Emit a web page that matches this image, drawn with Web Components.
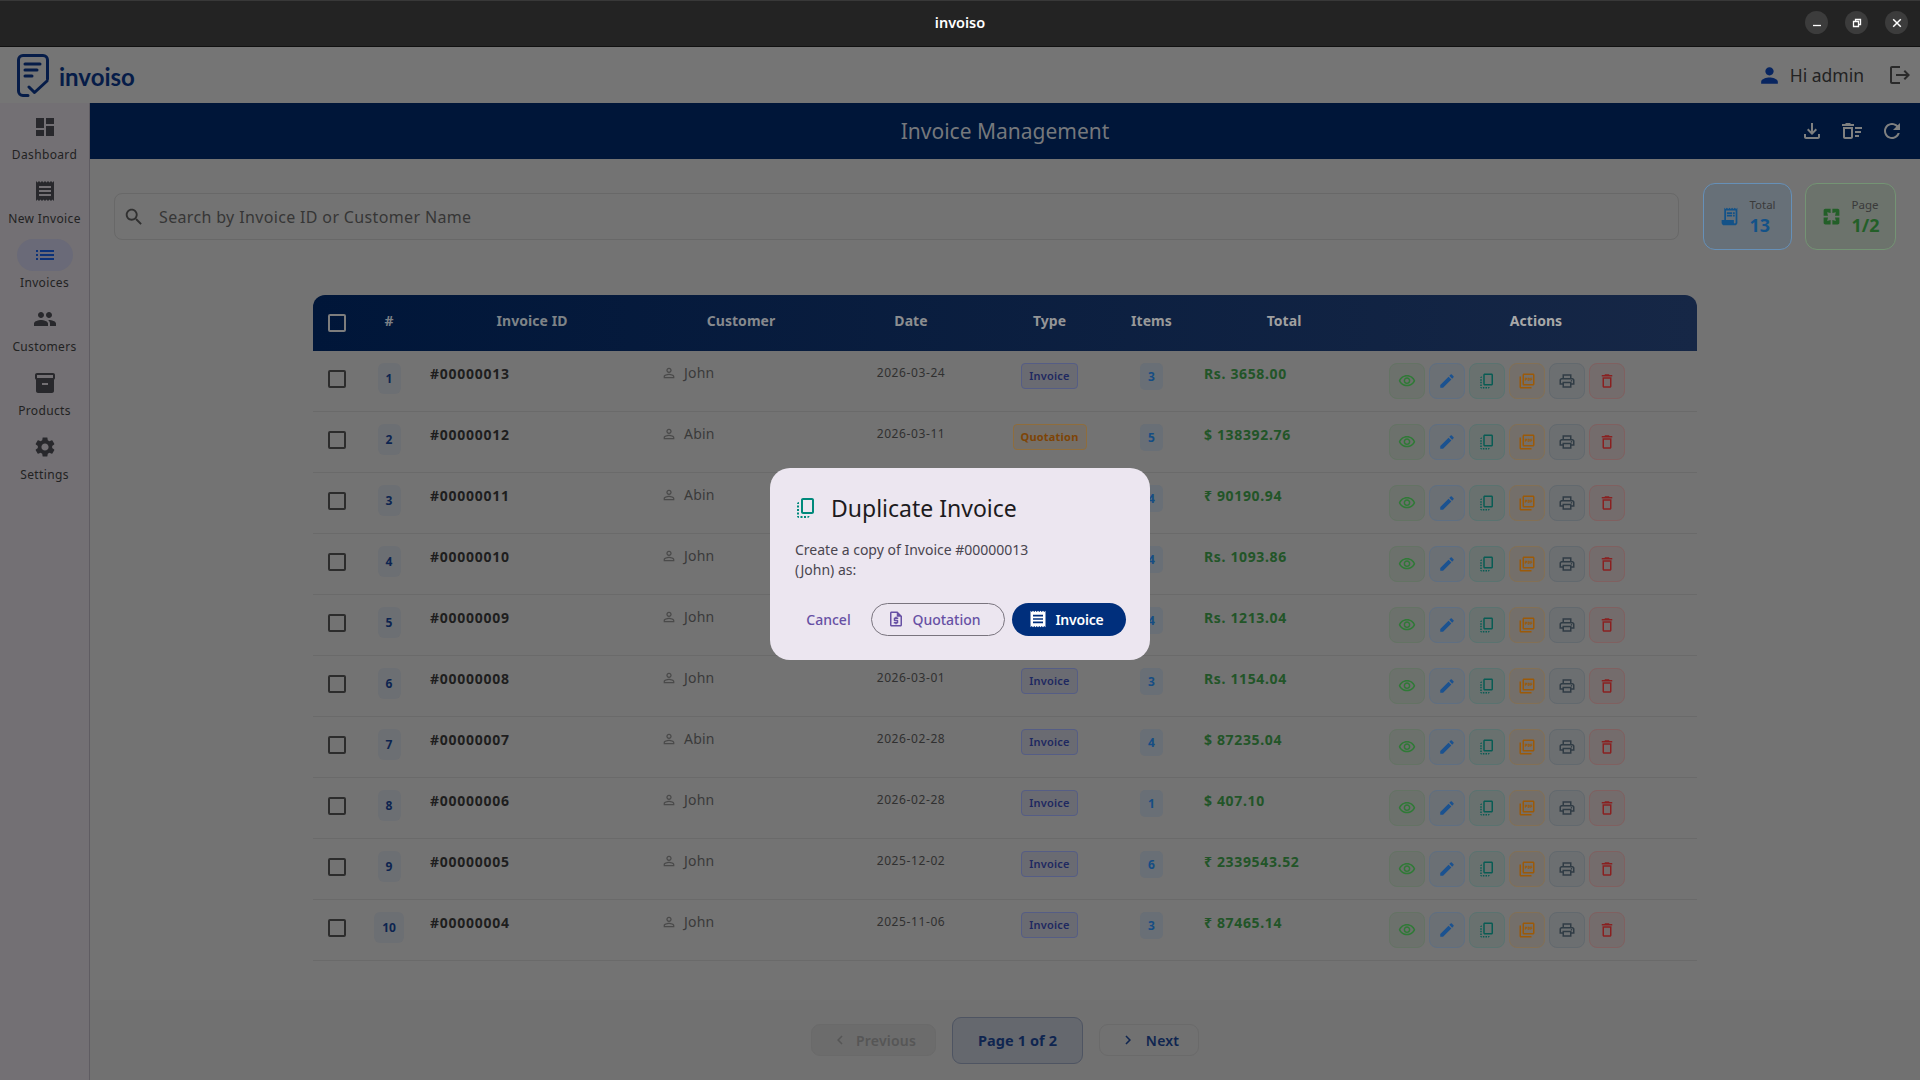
<!DOCTYPE html>
<html lang="en"><head><meta charset="utf-8"><title>invoiso</title>
<style>
html,body{margin:0;padding:0;height:100%;overflow:hidden;background:#737373}
body{font-family:"Noto Sans","Open Sans","Liberation Sans",sans-serif;color:#222}
</style></head><body>
<x-app>
  <x-titlebar slot="top">invoiso</x-titlebar>
  <x-appheader slot="top"></x-appheader>
  <x-rail slot="rail">
    <x-rail-item icon="dashboard" label="Dashboard"></x-rail-item>
    <x-rail-item icon="receipt" label="New Invoice"></x-rail-item>
    <x-rail-item icon="list" label="Invoices" active></x-rail-item>
    <x-rail-item icon="people" label="Customers"></x-rail-item>
    <x-rail-item icon="inventory" label="Products"></x-rail-item>
    <x-rail-item icon="settings" label="Settings"></x-rail-item>
  </x-rail>
  <x-pagebar slot="main">Invoice Management</x-pagebar>
  <x-toolbar slot="main"></x-toolbar>
  <x-inv-table slot="main"></x-inv-table>
  <x-pager slot="main"></x-pager>
</x-app>
<x-dialog></x-dialog>
<script>
const ICONS={
dashboard:'M3 13h8V3H3v10zm0 8h8v-6H3v6zm10 0h8V11h-8v10zm0-18v6h8V3h-8z',
receipt:'M18 17H6v-2h12v2zm0-4H6v-2h12v2zm0-4H6V7h12v2zM3 22l1.5-1.5L6 22l1.5-1.5L9 22l1.5-1.5L12 22l1.5-1.5L15 22l1.5-1.5L18 22l1.5-1.5L21 22V2l-1.5 1.5L18 2l-1.5 1.5L15 2l-1.5 1.5L12 2l-1.5 1.5L9 2 7.5 3.5 6 2 4.5 3.5 3 2v20z',
list:'M3 13h2v-2H3v2zm0 4h2v-2H3v2zm0-8h2V7H3v2zm4 4h14v-2H7v2zm0 4h14v-2H7v2zM7 7v2h14V7H7z',
people:'M16 11c1.66 0 2.99-1.34 2.99-3S17.66 5 16 5c-1.66 0-3 1.34-3 3s1.34 3 3 3zm-8 0c1.66 0 2.99-1.34 2.99-3S9.66 5 8 5C6.34 5 5 6.34 5 8s1.34 3 3 3zm0 2c-2.33 0-7 1.17-7 3.5V19h14v-2.5c0-2.33-4.67-3.5-7-3.5zm8 0c-.29 0-.62.02-.97.05 1.16.84 1.97 1.97 1.97 3.45V19h6v-2.5c0-2.33-4.67-3.5-7-3.5z',
inventory:'M20 2H4c-1 0-2 .9-2 2v3.01c0 .72.43 1.34 1 1.69V20c0 1.1 1.1 2 2 2h14c.9 0 2-.9 2-2V8.7c.57-.35 1-.97 1-1.69V4c0-1.1-1-2-2-2zm-5 12H9v-2h6v2zm5-7H4V4l16-.02V7z',
settings:'M19.14 12.94c.04-.3.06-.61.06-.94 0-.32-.02-.64-.07-.94l2.03-1.58c.18-.14.23-.41.12-.61l-1.92-3.32c-.12-.22-.37-.29-.59-.22l-2.39.96c-.5-.38-1.03-.7-1.62-.94l-.36-2.54c-.04-.24-.24-.41-.48-.41h-3.84c-.24 0-.43.17-.47.41l-.36 2.54c-.59.24-1.13.57-1.62.94l-2.39-.96c-.22-.08-.47 0-.59.22L2.74 8.87c-.12.21-.08.47.12.61l2.03 1.58c-.05.3-.09.63-.09.94s.02.64.07.94l-2.03 1.58c-.18.14-.23.41-.12.61l1.92 3.32c.12.22.37.29.59.22l2.39-.96c.5.38 1.03.7 1.62.94l.36 2.54c.05.24.24.41.48.41h3.84c.24 0 .44-.17.47-.41l.36-2.54c.59-.24 1.13-.56 1.62-.94l2.39.96c.22.08.47 0 .59-.22l1.92-3.32c.12-.22.07-.47-.12-.61l-2.01-1.58zM12 15.6c-1.98 0-3.6-1.62-3.6-3.6s1.62-3.6 3.6-3.6 3.6 1.62 3.6 3.6-1.62 3.6-3.6 3.6z',
search:'M15.5 14h-.79l-.28-.27C15.41 12.59 16 11.11 16 9.5 16 5.91 13.09 3 9.5 3S3 5.91 3 9.5 5.91 16 9.5 16c1.61 0 3.09-.59 4.23-1.57l.27.28v.79l5 4.99L20.49 19l-4.99-5zm-6 0C7.01 14 5 11.99 5 9.5S7.01 5 9.5 5 14 7.01 14 9.5 11.99 14 9.5 14z',
person:'M12 12c2.21 0 4-1.79 4-4s-1.79-4-4-4-4 1.79-4 4 1.79 4 4 4zm0 2c-2.67 0-8 1.34-8 4v2h16v-2c0-2.66-5.33-4-8-4z',
personO:'M12 5.9c1.16 0 2.1.94 2.1 2.1s-.94 2.1-2.1 2.1S9.9 9.16 9.9 8s.94-2.1 2.1-2.1m0 9c2.97 0 6.1 1.46 6.1 2.1v1.1H5.9V17c0-.64 3.13-2.1 6.1-2.1M12 4C9.79 4 8 5.79 8 8s1.79 4 4 4 4-1.79 4-4-1.79-4-4-4zm0 9c-2.67 0-8 1.34-8 4v3h16v-3c0-2.66-5.33-4-8-4z',
logout:'M17 7l-1.41 1.41L18.17 11H8v2h10.17l-2.58 2.58L17 17l5-5zM4 5h8V3H4c-1.1 0-2 .9-2 2v14c0 1.1.9 2 2 2h8v-2H4V5z',
download:'M18 15v3H6v-3H4v3c0 1.1.9 2 2 2h12c1.1 0 2-.9 2-2v-3h-2zm-1-4l-1.41-1.41L13 12.17V4h-2v8.17L8.41 9.59 7 11l5 5 5-5z',
sweep:'M15 16h4v2h-4zm0-8h7v2h-7zm0 4h6v2h-6zM3 18c0 1.1.9 2 2 2h6c1.1 0 2-.9 2-2V8H3v10zm2-8h6v8H5v-8zm5-6H6L5 5H2v2h12V5h-3z',
refresh:'M17.65 6.35C16.2 4.9 14.21 4 12 4c-4.42 0-7.99 3.58-7.99 8s3.57 8 7.99 8c3.73 0 6.84-2.55 7.73-6h-2.08c-.82 2.33-3.04 4-5.65 4-3.31 0-6-2.69-6-6s2.69-6 6-6c1.66 0 3.14.69 4.22 1.78L13 11h7V4l-2.35 2.35z',
receiptLong:'M19.5 3.5 18 2l-1.5 1.5L15 2l-1.5 1.5L12 2l-1.5 1.5L9 2 7.5 3.5 6 2v14H3v3c0 1.66 1.34 3 3 3h12c1.66 0 3-1.34 3-3V2l-1.5 1.5zM19 19c0 .55-.45 1-1 1s-1-.45-1-1v-3H8V5h11v14zM9 7h6v2H9zm7 0h2v2h-2zm-7 3h6v2H9zm7 0h2v2h-2z',
pages:'M3 5v6h5L7 7l4 1V3H5c-1.1 0-2 .9-2 2zm5 8H3v6c0 1.1.9 2 2 2h6v-5l-4 1 1-4zm9 4l-4-1v5h6c1.1 0 2-.9 2-2v-6h-5l1 4zm2-14h-6v5l4-1-1 4h5V5c0-1.1-.9-2-2-2z',
eye:'M12 6c3.79 0 7.17 2.13 8.82 5.5C19.17 14.87 15.79 17 12 17s-7.17-2.13-8.82-5.5C4.83 8.13 8.21 6 12 6m0-2C7 4 2.73 7.11 1 11.5 2.73 15.89 7 19 12 19s9.27-3.11 11-7.5C21.27 7.11 17 4 12 4zm0 5c1.38 0 2.5 1.12 2.5 2.5S13.38 14 12 14s-2.5-1.12-2.5-2.5S10.62 9 12 9m0-2c-2.48 0-4.5 2.02-4.5 4.5S9.52 16 12 16s4.5-2.02 4.5-4.5S14.48 7 12 7z',
edit:'M3 17.25V21h3.75L17.81 9.94l-3.75-3.75L3 17.25zM20.71 7.04c.39-.39.39-1.02 0-1.41l-2.34-2.34c-.39-.39-1.02-.39-1.41 0l-1.83 1.83 3.75 3.75 1.83-1.83z',
copy:'M18 2H9C7.9 2 7 2.9 7 4v12c0 1.1.9 2 2 2h9c1.1 0 2-.9 2-2V4C20 2.9 19.1 2 18 2zm0 14H9V4h9v12zM3 15v-2h2v2H3zm0-5.5h2v2H3v-2zM10 20h2v2h-2v-2zM3 18.5v-2h2v2H3zM5 22c-1.1 0-2-.9-2-2h2v2zm3.5 0h-2v-2h2v2zm5 0v-2h2c0 1.1-.9 2-2 2zM5 6v2H3c0-1.1.9-2 2-2z',
pdf:'M20 2H8c-1.1 0-2 .9-2 2v12c0 1.1.9 2 2 2h12c1.1 0 2-.9 2-2V4c0-1.1-.9-2-2-2zm0 14H8V4h12v12zM4 6H2v14c0 1.1.9 2 2 2h14v-2H4V6zM9 7.5h2.2c.5 0 .9.4.9.9v.9c0 .5-.4.9-.9.9h-1v1.3H9zm1.2 1v.8h.7v-.8zM12.8 7.5h1.9c.5 0 .9.4.9.9v2.3c0 .5-.4.9-.9.9h-1.9zm1.2 1v2.1h.4V8.500zM16.400 7.500H19v1h-1.400v.8H19v1h-1.400v1.300h-1.200z',
print:'M19 8h-1V3H6v5H5c-1.66 0-3 1.34-3 3v6h4v4h12v-4h4v-6c0-1.66-1.34-3-3-3zM8 5h8v3H8V5zm8 12v2H8v-4h8v2zm2-2v-2H6v2H4v-4c0-.55.45-1 1-1h14c.55 0 1 .45 1 1v4h-2zM18 10.500a1 1 0 1 1 0 2 1 1 0 0 1 0-2z',
trash:'M6 19c0 1.1.9 2 2 2h8c1.1 0 2-.9 2-2V7H6v12zM8 9h8v10H8V9zm7.5-5l-1-1h-5l-1 1H5v2h14V4z',
quote:'M14 2H6c-1.1 0-1.99.9-1.99 2L4 20c0 1.1.89 2 1.99 2H18c1.1 0 2-.9 2-2V8l-6-6zM6 20V4h7v5h5v11H6zm5-1h2v-1h1c.55 0 1-.45 1-1v-3c0-.55-.45-1-1-1h-3v-1h4v-2h-2V9h-2v1h-1c-.55 0-1 .45-1 1v3c0 .55.45 1 1 1h3v1H9v2h2v1z',
left:'M15.41 7.41 14 6l-6 6 6 6 1.41-1.41L10.83 12z',
right:'M10 6 8.590 7.410 13.170 12l-4.580 4.590L10 18l6-6z'
};
const shadow=(el,html)=>{const r=el.attachShadow({mode:'open'});r.innerHTML=html;return r;};
class XIcon extends HTMLElement{connectedCallback(){if(this.shadowRoot)return;
  const s=this.getAttribute('size')||24;
  shadow(this,`<style>:host{display:inline-flex;width:${s}px;height:${s}px;flex:none}svg{width:100%;height:100%;display:block;fill:currentColor}</style><svg viewBox="0 0 24 24"><path d="${ICONS[this.getAttribute('name')]}"/></svg>`);}}
customElements.define('x-icon',XIcon);

class XApp extends HTMLElement{constructor(){super();shadow(this,`<style>
:host{display:flex;flex-direction:column;width:1920px;height:1080px;overflow:hidden;background:#737373}
.body{flex:1;display:flex;min-height:0}
.main{flex:1;display:flex;flex-direction:column;min-width:0}
::slotted(x-pager){margin-top:auto}
</style><slot name="top"></slot><div class="body"><slot name="rail"></slot><div class="main"><slot name="main"></slot></div></div>`);}}
customElements.define('x-app',XApp);

class XTitlebar extends HTMLElement{constructor(){super();shadow(this,`<style>
:host{display:flex;align-items:center;justify-content:center;position:relative;height:47px;box-sizing:border-box;padding-bottom:3px;background:#232323;border-top:1px solid #383838;border-bottom:1px solid #111;color:#fff;font:600 14.500px "Noto Sans",sans-serif}
.ctl{position:absolute;right:12px;top:10px;display:flex;gap:17px}
.b{width:23px;height:23px;border-radius:50%;background:#3c3c3c;display:flex;align-items:center;justify-content:center}
svg{width:12px;height:12px;stroke:#fff;fill:none;stroke-width:1.300}
</style><slot></slot><div class="ctl">
<div class="b"><svg viewBox="0 0 12 12"><path d="M2 8.500h8"/></svg></div>
<div class="b"><svg viewBox="0 0 12 12"><path d="M2.500 4.500h5v5h-5zM4.500 4.500V2.500h5v5H7.500"/></svg></div>
<div class="b"><svg viewBox="0 0 12 12"><path d="M2.200 2.200l7.600 7.600M9.800 2.200l-7.600 7.600" stroke-width="1.500"/></svg></div>
</div>`);}}
customElements.define('x-titlebar',XTitlebar);

class XAppheader extends HTMLElement{constructor(){super();shadow(this,`<style>
:host{display:flex;align-items:center;height:56px;background:#757575;flex:none;padding:0 8px 0 17px;box-sizing:border-box}
.logo{display:flex;align-items:center;gap:10px;color:#061c48}
.logo svg{width:32px;height:43px;display:block}
.word{font:700 24px "Lato","Noto Sans",sans-serif;line-height:1;padding-top:3px;color:#061c48}
.sp{flex:1}
.user{display:flex;align-items:center;color:#082560}
.hi{font-size:17.500px;color:#222;margin-left:8px}
.out{margin-left:24px;color:#2a2a2a}
</style><div class="logo"><svg viewBox="0 0 32 43" fill="none" stroke="currentColor" stroke-width="3" stroke-linecap="round" stroke-linejoin="round"><path d="M11 41.500H6c-2.500 0-4.500-2-4.500-4.500V6C1.500 3.500 3.500 1.500 6 1.500h20c2.500 0 4.500 2 4.500 4.500v19"/><path d="M8 10h15M8 16h12M8 22h7"/><path d="M12 33l5.500 5.500L30 27"/></svg><span class="word">invoiso</span></div>
<div class="sp"></div><div class="user"><x-icon name="person" size="25"></x-icon><span class="hi">Hi admin</span></div><x-icon class="out" name="logout" size="24"></x-icon>`);}}
customElements.define('x-appheader',XAppheader);

class XRail extends HTMLElement{constructor(){super();shadow(this,`<style>
:host{display:flex;flex-direction:column;width:90px;flex:none;box-sizing:border-box;background:#737074;border-right:1px solid #5f5c62;padding-top:8px}
</style><slot></slot>`);}}
customElements.define('x-rail',XRail);
class XRailItem extends HTMLElement{connectedCallback(){if(this.shadowRoot)return;
 const a=this.hasAttribute('active');
 shadow(this,`<style>
:host{display:flex;flex-direction:column;align-items:center;height:64px;box-sizing:border-box}
.pill{width:56px;height:32px;border-radius:16px;display:flex;align-items:center;justify-content:center;background:${a?'#6a6a78':'transparent'};color:${a?'#0c3278':'#28282c'}}
.l{font-size:12px;line-height:16px;margin-top:4px;letter-spacing:.35px;color:#222;white-space:nowrap}
</style><div class="pill"><x-icon name="${this.getAttribute('icon')}"></x-icon></div><div class="l">${this.getAttribute('label')}</div>`);}}
customElements.define('x-rail-item',XRailItem);

class XPagebar extends HTMLElement{constructor(){super();shadow(this,`<style>
:host{display:flex;align-items:center;justify-content:center;position:relative;height:56px;box-sizing:border-box;padding-bottom:1px;flex:none;background:#001639;color:#75787c;font-size:21px}
.tools{position:absolute;right:16px;top:16px;display:flex;gap:16px;color:#7f8080}
</style><slot></slot><div class="tools"><x-icon name="download"></x-icon><x-icon name="sweep"></x-icon><x-icon name="refresh"></x-icon></div>`);}}
customElements.define('x-pagebar',XPagebar);

class XStat extends HTMLElement{connectedCallback(){if(this.shadowRoot)return;
 const c=this.getAttribute('color'),bg=this.getAttribute('bg'),bd=this.getAttribute('bd'),w=this.getAttribute('w');
 shadow(this,`<style>
:host{display:flex;align-items:center;justify-content:center;gap:9px;box-sizing:border-box;width:${w}px;height:67px;border-radius:12px;background:${bg};border:1px solid ${bd};color:${c};flex:none}
.col{display:flex;flex-direction:column}
.k{font-size:11.500px;line-height:16px;color:#3a3a3a}
.v{font-size:18px;line-height:24px;font-weight:700}
</style><x-icon name="${this.getAttribute('icon')}" size="21"></x-icon><div class="col"><span class="k">${this.getAttribute('k')}</span><span class="v">${this.getAttribute('v')}</span></div>`);}}
customElements.define('x-stat',XStat);

class XToolbar extends HTMLElement{constructor(){super();shadow(this,`<style>
:host{display:flex;align-items:center;flex:none;gap:24px;padding:24px 24px 0}
.search{flex:1;height:47px;box-sizing:border-box;border:1px solid #686868;border-radius:8px;display:flex;align-items:center;padding-left:8px;gap:14px;color:#363636;font-size:16px;letter-spacing:.35px}
.ic{color:#303030}
.stats{display:flex;gap:13px}
</style><div class="search"><x-icon class="ic" name="search" size="22"></x-icon><span>Search by Invoice ID or Customer Name</span></div>
<div class="stats"><x-stat icon="receiptLong" k="Total" v="13" w="89" color="#135288" bg="#677078" bd="#6690b8"></x-stat><x-stat icon="pages" k="Page" v="1/2" w="91" color="#235f28" bg="#6c736c" bd="#749474"></x-stat></div>`);}}
customElements.define('x-toolbar',XToolbar);

const COLS='52px 48px 238px 180px 160px 117px 87px 178px 324px';
class XCheck extends HTMLElement{constructor(){super();shadow(this,`<style>:host{display:block;width:18px;height:18px;box-sizing:border-box;border:2px solid currentColor;border-radius:2px}</style>`);}}
customElements.define('x-check',XCheck);

class XChip extends HTMLElement{connectedCallback(){if(this.shadowRoot)return;
 const q=this.getAttribute('kind')==='Quotation';
 shadow(this,`<style>
:host{display:inline-flex;align-items:center;justify-content:center;box-sizing:border-box;height:26px;padding-bottom:2px;width:${q?74:57}px;border-radius:4px;font-size:11px;font-weight:${q?700:600};letter-spacing:.2px;
 color:${q?'#7e4406':'#1e2860'};background:${q?'#756f68':'#6a6b72'};border:1px solid ${q?'#8f6d3c':'#555d85'}}
</style>${this.getAttribute('kind')}`);}}
customElements.define('x-chip',XChip);

class XActBtn extends HTMLElement{connectedCallback(){if(this.shadowRoot)return;
 shadow(this,`<style>
:host{display:flex;align-items:center;justify-content:center;width:36px;height:36px;box-sizing:border-box;border-radius:8px;color:${this.getAttribute('c')};
 background:${this.getAttribute('bg')};border:1px solid ${this.getAttribute('bd')}}
</style><x-icon name="${this.getAttribute('icon')}" size="18"></x-icon>`);}}
customElements.define('x-act-btn',XActBtn);

class XInvRow extends HTMLElement{connectedCallback(){if(this.shadowRoot)return;
 const d=JSON.parse(this.getAttribute('data'));
 const wide=String(d.n).length>1;
 const acts=[['eye','#2f7a36','#6c716c','#647364'],['edit','#1b5290','#6b7075','#5f6f82'],['copy','#085c54','#69716f','#5a7370'],['pdf','#9c5a08','#746f6a','#837055'],['print','#303c45','#6c6f71','#62696e'],['trash','#892020','#746c6c','#806060']];
 shadow(this,`<style>
:host{display:grid;grid-template-columns:${COLS};height:61px;box-sizing:border-box;border-bottom:1px solid #6a6a6a;align-items:start}
.c{display:flex;padding-top:12px;box-sizing:border-box;height:60px}
.ck{padding:19px 0 0 15px;color:#2c2c2c}
.num{justify-content:center}
.num b{display:flex;align-items:center;justify-content:center;width:${wide?30:23}px;height:31px;border-radius:6px;background:#6c6f73;color:#0c2450;font-size:12px;font-weight:700}
.id{padding-left:17px;font-size:14px;font-weight:700;line-height:22px;letter-spacing:.75px;color:#1e1e1e}
.cu{padding-left:10px;padding-top:11px;align-items:flex-start;font-size:14px;line-height:21px;letter-spacing:.2px;color:#3a3a3a;gap:7px}
.cu x-icon{color:#4a4a4a;margin-top:3px}
.dt{justify-content:center;font-size:12px;line-height:19px;letter-spacing:.6px;color:#303030}
.ty,.it{justify-content:center}
.it b{display:flex;align-items:center;justify-content:center;width:23px;height:27px;border-radius:5px;background:#696f76;color:#154d84;font-size:12px;font-weight:700}
.to{padding-left:9px;font-size:14px;font-weight:700;line-height:22px;letter-spacing:.65px;color:#225528}
.ac{padding-left:16px;gap:4px}
</style>
<div class="c ck"><x-check></x-check></div>
<div class="c num"><b>${d.n}</b></div>
<div class="c id">${d.id}</div>
<div class="c cu"><x-icon name="personO" size="16"></x-icon>${d.cust}</div>
<div class="c dt">${d.date||''}</div>
<div class="c ty">${d.type?`<x-chip kind="${d.type}"></x-chip>`:''}</div>
<div class="c it"><b>${d.items}</b></div>
<div class="c to">${d.total}</div>
<div class="c ac">${acts.map(a=>`<x-act-btn icon="${a[0]}" c="${a[1]}" bg="${a[2]}" bd="${a[3]}"></x-act-btn>`).join('')}</div>`);}}
customElements.define('x-inv-row',XInvRow);

const ROWS=[
{n:1,id:'#00000013',cust:'John',date:'2026-03-24',type:'Invoice',items:3,total:'Rs. 3658.00'},
{n:2,id:'#00000012',cust:'Abin',date:'2026-03-11',type:'Quotation',items:5,total:'$ 138392.76'},
{n:3,id:'#00000011',cust:'Abin',items:4,total:'₹ 90190.94'},
{n:4,id:'#00000010',cust:'John',items:4,total:'Rs. 1093.86'},
{n:5,id:'#00000009',cust:'John',items:4,total:'Rs. 1213.04'},
{n:6,id:'#00000008',cust:'John',date:'2026-03-01',type:'Invoice',items:3,total:'Rs. 1154.04'},
{n:7,id:'#00000007',cust:'Abin',date:'2026-02-28',type:'Invoice',items:4,total:'$ 87235.04'},
{n:8,id:'#00000006',cust:'John',date:'2026-02-28',type:'Invoice',items:1,total:'$ 407.10'},
{n:9,id:'#00000005',cust:'John',date:'2025-12-02',type:'Invoice',items:6,total:'₹ 2339543.52'},
{n:10,id:'#00000004',cust:'John',date:'2025-11-06',type:'Invoice',items:3,total:'₹ 87465.14'}];
class XInvTable extends HTMLElement{constructor(){super();
 const head=[['#','#7b8086'],['Invoice ID','#7e8387'],['Customer','#86898d'],['Date','#8c8e90'],['Type','#949597'],['Items','#989999'],['Total','#a0a0a0'],['Actions','#a8a8a8']];
 const r=shadow(this,`<style>
:host{display:block;width:1384px;margin:45px auto 0;flex:none}
.h{display:grid;grid-template-columns:${COLS};height:56px;border-radius:12px 12px 0 0;background:linear-gradient(90deg,#001639,#162746);font-size:14px;font-weight:700;letter-spacing:.05px}
.h div{display:flex;justify-content:center;padding-top:16px;line-height:20px}
.h .ck{justify-content:flex-start;padding:19px 0 0 15px;color:#7d7d7d}
.h div:last-child{padding-left:2px}
</style><div class="h"><div class="ck"><x-check></x-check></div>${head.map(h=>`<div style="color:${h[1]}">${h[0]}</div>`).join('')}</div><div id="b"></div>`);
 const b=r.getElementById('b');ROWS.forEach(d=>{const e=document.createElement('x-inv-row');e.setAttribute('data',JSON.stringify(d));b.appendChild(e);});}}
customElements.define('x-inv-table',XInvTable);

class XPager extends HTMLElement{constructor(){super();shadow(this,`<style>
:host{display:flex;align-items:center;justify-content:center;gap:16px;height:80px;flex:none;background:#717171;font-size:14px;letter-spacing:.2px}
.b{display:flex;align-items:center;justify-content:center;box-sizing:border-box;height:32px;border-radius:9px;border:1px solid #6a6a6a;font-weight:600}
.p{width:125px;background:#6c6c6c;color:#565656;gap:7px}
.n{width:100px;color:#0f2550;gap:9px}
.m{width:131px;height:47px;border-color:#4e5462;background:#65686e;color:#0f2550;font-size:14.500px;letter-spacing:.1px;font-weight:700}
</style><div class="b p"><x-icon name="left" size="18"></x-icon>Previous</div><div class="b m">Page 1 of 2</div><div class="b n"><x-icon name="right" size="18"></x-icon>Next</div>`);}}
customElements.define('x-pager',XPager);

class XDialog extends HTMLElement{constructor(){super();shadow(this,`<style>
:host{position:fixed;left:0;right:0;top:47px;bottom:0;display:flex;align-items:center;justify-content:center;z-index:10}
.d{width:380px;height:192px;box-sizing:border-box;background:#ECE6F0;border-radius:20px;padding:24px;display:flex;flex-direction:column}
.t{display:flex;align-items:center;gap:13px;color:#1d1b20;font-size:23px;line-height:32px}
.t x-icon{color:#00897B}
.p{font-size:14px;line-height:20px;color:#49454F;margin:16px 0 0 1px;width:270px}
.a{margin-top:auto;display:flex;align-items:center;gap:7px;justify-content:flex-end;font-size:14px;font-weight:500}
.b{display:flex;align-items:center;justify-content:center;height:33px;box-sizing:border-box;border-radius:17px;flex:none}
.c{color:#6750A4;width:71px}
.q{color:#6750A4;border:1px solid #79747E;width:134px;gap:7px;padding-right:8px}
.i{background:#002F7C;color:#fff;width:114px;gap:7px;padding-right:6px;font-weight:600;letter-spacing:-.2px}
</style><div class="d"><div class="t"><x-icon name="copy" size="24"></x-icon>Duplicate Invoice</div>
<div class="p">Create a copy of Invoice #00000013 (John) as:</div>
<div class="a"><div class="b c">Cancel</div><div class="b q"><x-icon name="quote" size="18"></x-icon>Quotation</div><div class="b i"><x-icon name="receipt" size="20"></x-icon>Invoice</div></div></div>`);}}
customElements.define('x-dialog',XDialog);
</script>
</body></html>
